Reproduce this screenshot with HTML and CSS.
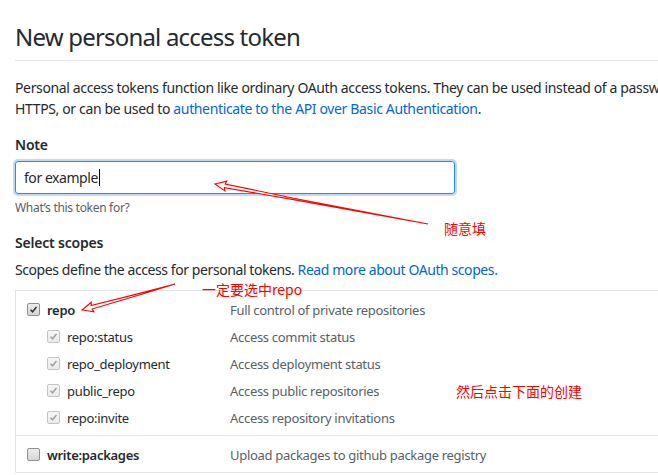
FILE: index.html
```html
<!DOCTYPE html>
<html lang="en">
<head>
<meta charset="utf-8">
<title>New personal access token</title>
<link rel="stylesheet" href="styles.css">
</head>
<body>
<div class="page">
  <div class="subhead"><h2 class="subhead-title">New personal access token</h2></div>
  <p class="intro">Personal access tokens function like ordinary OAuth access tokens. They can be used instead of a password for Git over<br>HTTPS, or can be used to <a href="#">authenticate to the API over Basic Authentication</a>.</p>

  <div class="form-group">
    <label class="form-label">Note</label>
    <div class="input focused"><span class="input-text">for example</span><span class="caret"></span></div>
    <p class="note">What’s this token for?</p>
  </div>

  <div class="form-group scopes-group">
    <label class="form-label">Select scopes</label>
    <p class="scopes-desc">Scopes define the access for personal tokens. <a href="#">Read more about OAuth scopes.</a></p>

    <div class="scopes-box">
      <div class="scope-group">
        <div class="scope-row">
          <div class="scope-name"><span class="cb checked"><svg viewBox="0 0 13 13"><path d="M3 6.8 L5.4 9.2 L10 3.6"/></svg></span><span class="name-main">repo</span></div>
          <div class="scope-desc">Full control of private repositories</div>
        </div>
        <div class="scope-row sub">
          <div class="scope-name"><span class="cb checked disabled"><svg viewBox="0 0 13 13"><path d="M3 6.8 L5.4 9.2 L10 3.6"/></svg></span><span>repo:status</span></div>
          <div class="scope-desc">Access commit status</div>
        </div>
        <div class="scope-row sub">
          <div class="scope-name"><span class="cb checked disabled"><svg viewBox="0 0 13 13"><path d="M3 6.8 L5.4 9.2 L10 3.6"/></svg></span><span>repo_deployment</span></div>
          <div class="scope-desc">Access deployment status</div>
        </div>
        <div class="scope-row sub">
          <div class="scope-name"><span class="cb checked disabled"><svg viewBox="0 0 13 13"><path d="M3 6.8 L5.4 9.2 L10 3.6"/></svg></span><span>public_repo</span></div>
          <div class="scope-desc">Access public repositories</div>
        </div>
        <div class="scope-row sub">
          <div class="scope-name"><span class="cb checked disabled"><svg viewBox="0 0 13 13"><path d="M3 6.8 L5.4 9.2 L10 3.6"/></svg></span><span>repo:invite</span></div>
          <div class="scope-desc">Access repository invitations</div>
        </div>
      </div>
      <div class="scope-group">
        <div class="scope-row">
          <div class="scope-name"><span class="cb"></span><span class="name-main">write:packages</span></div>
          <div class="scope-desc">Upload packages to github package registry</div>
        </div>
      </div>
    </div>
  </div>
</div>

<div class="anno anno-1">随意填</div>
<div class="anno anno-2">一定要选中repo</div>
<div class="anno anno-3">然后点击下面的创建</div>

<svg class="arrows" width="658" height="475" viewBox="0 0 658 475">
  <g transform="translate(215 184) rotate(10.64)">
    <polygon points="0,0 11,-5 10,-1.8 80,-0.6 216.7,0 80,0.9 10,1.8 11,5"/>
  </g>
  <g transform="translate(82 310) rotate(-15.62)">
    <polygon points="0,0 11,-5 10,-1.8 60,-0.5 96.6,0 60,0.9 10,1.8 11,5"/>
  </g>
</svg>
</body>
</html>
```

FILE: styles.css
```css
html, body {
  margin: 0;
  padding: 0;
  background: #fff;
}
body {
  width: 658px;
  height: 475px;
  overflow: hidden;
  position: relative;
  font-family: "Noto Sans", "Open Sans", sans-serif;
  font-size: 14px;
  line-height: 21px;
  color: #24292e;
}
a {
  color: #0366d6;
  text-decoration: none;
}
.page {
  width: 760px;
  padding: 19px 0 0 15px;
}
.subhead {
  border-bottom: 1px solid #e1e4e8;
  padding-bottom: 5px;
}
.subhead-title {
  margin: 0;
  font-size: 24px;
  font-weight: 400;
  line-height: 36px;
  letter-spacing: -0.8px;
}
.intro {
  margin: 16px 0 0;
  white-space: nowrap;
  letter-spacing: -0.36px;
}
.form-group {
  margin-top: 15px;
}
.form-label {
  display: block;
  font-weight: 600;
  line-height: 21px;
  letter-spacing: -0.2px;
}
.input {
  width: 422px;
  height: 31px;
  margin-top: 6px;
  padding: 0 8px;
  border: 1px solid #2188ff;
  border-radius: 3px;
  box-shadow: 0 0 0 2px rgba(3, 102, 214, 0.25);
  display: flex;
  align-items: center;
  letter-spacing: -0.45px;
}
.caret {
  display: inline-block;
  width: 1px;
  height: 17px;
  background: #000;
  margin-left: 1px;
}
.note {
  margin: 5px 0 0;
  font-size: 12px;
  line-height: 18px;
  color: #586069;
  letter-spacing: -0.3px;
}
.scopes-group {
  margin-top: 15px;
}
.scopes-desc {
  margin: 6px 0 0;
  letter-spacing: -0.42px;
}
.scopes-box {
  margin-top: 10px;
  border: 1px solid #e1e4e8;
  border-right: none;
}
.scope-group {
  padding: 6px 0 3px;
}
.scope-group + .scope-group {
  border-top: 1px solid #e1e4e8;
}
.scope-row {
  display: grid;
  grid-template-columns: 203px 1fr;
  height: 27px;
  align-items: center;
  padding-left: 11px;
  font-size: 13px;
  letter-spacing: -0.3px;
}
.scope-name {
  display: flex;
  align-items: center;
}
.scope-row.sub .scope-name {
  padding-left: 20px;
}
.name-main {
  font-weight: 600;
}
.scope-desc {
  color: #586069;
}
.cb {
  width: 11px;
  height: 11px;
  border: 1px solid #8f8f8f;
  border-radius: 2px;
  background: linear-gradient(#ececec, #d6d6d6);
  margin-right: 7px;
  margin-top: -3px;
  display: inline-flex;
  flex: none;
}
.cb svg {
  width: 11px;
  height: 11px;
  fill: none;
  stroke: #333;
  stroke-width: 1.8;
}
.cb.disabled {
  border-color: #c4c4c4;
  background: linear-gradient(#f6f6f6, #ebebeb);
}
.cb.disabled svg {
  stroke: #a0a0a0;
}
.anno {
  position: absolute;
  color: #ff0000;
  font-family: "Noto Sans CJK SC", "Noto Sans", sans-serif;
  font-size: 14px;
  line-height: 20px;
  white-space: nowrap;
}
.anno-1 { left: 444px; top: 218px; }
.anno-2 { left: 202px; top: 279px; }
.anno-3 { left: 456px; top: 381px; }
.arrows {
  position: absolute;
  left: 0;
  top: 0;
  pointer-events: none;
}
.arrows polygon {
  fill: #fff;
  stroke: #ff0000;
  stroke-width: 1.1;
  stroke-linejoin: miter;
}
```
